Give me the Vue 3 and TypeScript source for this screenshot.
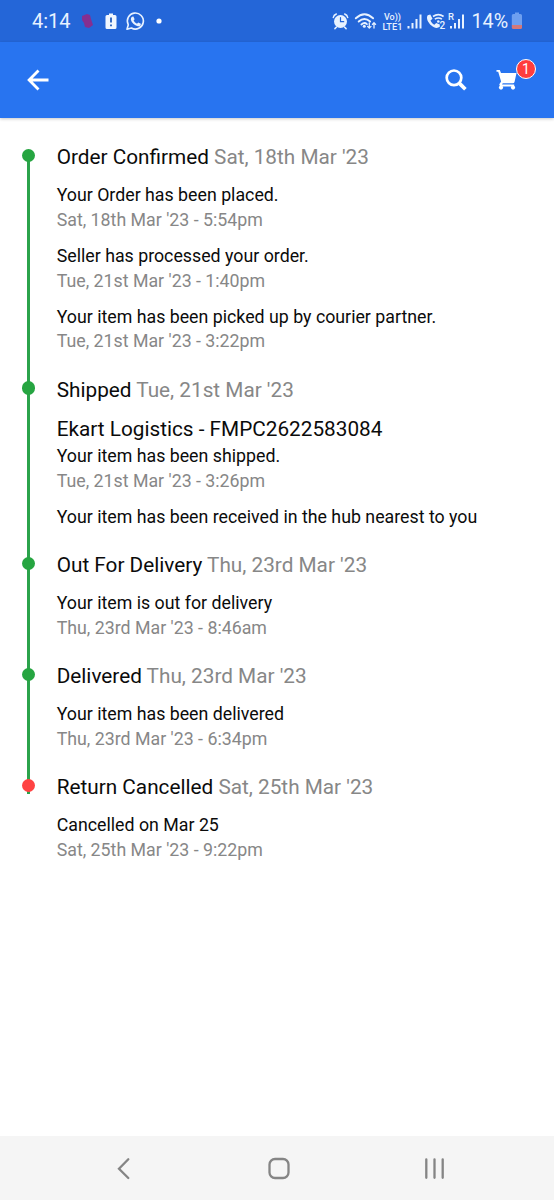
<script setup lang="ts">
interface TrackingEvent {
  text: string
  time?: string
}
interface Step {
  title: string
  date: string
  courier?: string
  cancelled?: boolean
  events: TrackingEvent[]
}

const steps: Step[] = [
  {
    title: 'Order Confirmed',
    date: "Sat, 18th Mar '23",
    events: [
      { text: 'Your Order has been placed.', time: "Sat, 18th Mar '23 - 5:54pm" },
      { text: 'Seller has processed your order.', time: "Tue, 21st Mar '23 - 1:40pm" },
      { text: 'Your item has been picked up by courier partner.', time: "Tue, 21st Mar '23 - 3:22pm" },
    ],
  },
  {
    title: 'Shipped',
    date: "Tue, 21st Mar '23",
    courier: 'Ekart Logistics - FMPC2622583084',
    events: [
      { text: 'Your item has been shipped.', time: "Tue, 21st Mar '23 - 3:26pm" },
      { text: 'Your item has been received in the hub nearest to you' },
    ],
  },
  {
    title: 'Out For Delivery',
    date: "Thu, 23rd Mar '23",
    events: [{ text: 'Your item is out for delivery', time: "Thu, 23rd Mar '23 - 8:46am" }],
  },
  {
    title: 'Delivered',
    date: "Thu, 23rd Mar '23",
    events: [{ text: 'Your item has been delivered', time: "Thu, 23rd Mar '23 - 6:34pm" }],
  },
  {
    title: 'Return Cancelled',
    date: "Sat, 25th Mar '23",
    cancelled: true,
    events: [{ text: 'Cancelled on Mar 25', time: "Sat, 25th Mar '23 - 9:22pm" }],
  },
]
</script>

<template>
  <div class="screen">
    <div class="status">
      <span class="clock">4:14</span>
      <svg class="notices" width="90" height="42" viewBox="76 0 90 42">
        <path d="M82 16l5-2 3 1 1 4 2 6-4 3-4-1-1-4-2-3z" fill="#852f91" />
        <path d="M109 13.500h4v1.500h2q1.500 0 1.500 1.500v11q0 1.500-1.500 1.500h-8q-1.500 0-1.500-1.500v-11q0-1.500 1.500-1.500h2z" fill="#f1f7ff" />
        <path d="M111 17.500v5M111 24.500v1.800" stroke="#245dbc" stroke-width="1.800" />
        <path d="M127 29.300l1.300-4.500a8 8 0 1 1 3.100 3.200z" fill="none" stroke="#e8f2ff" stroke-width="1.600" stroke-linejoin="round" />
        <path d="M132.100 16.700l1.300-.2 1.200 2.800-1 1.300c.8 1.500 1.900 2.500 3.400 3.200l1.200-1.300 2.700 1.300c-.1 2-1.600 2.800-3.100 2.500-3.300-.8-6.200-3.600-6.900-6.500-.2-1.300.3-2.500 1.200-3.100z" fill="#e8f2ff" />
        <circle cx="159" cy="21" r="2.600" fill="#fff" />
      </svg>
      <svg class="signals" width="138" height="42" viewBox="330 0 138 42">
        <g fill="none" stroke="#e8f2ff" stroke-linecap="round">
          <circle cx="339.500" cy="21.500" r="6.500" fill="#e8f2ff" stroke="none" />
          <path d="M332.300 17.500q.4-2.500 3-3.500M343.700 14q2.600 1 3 3.500M335.500 27l-1.600 1.600M343.500 27l1.600 1.600" stroke-width="1.500" />
          <path d="M339.500 17.500v4.200h3.200" stroke="#2466d8" stroke-width="1.200" />
          <path d="M354.800 18.300q8.700-8 17.300 0M357.700 21.500q5.700-5.200 11.400 0M360.400 24.500q3-2.600 5.500-.4" stroke-width="1.900" />
          <path d="M368.300 22.800v5.300m-1.700-1.700l1.700 1.700 1.700-1.700M373 28v-5.300m-1.600 1.700l1.600-1.700 1.600 1.700" stroke-width="1.300" />
        </g>
        <circle cx="363.300" cy="26.300" r="1.500" fill="#e8f2ff" />
        <g fill="#e8f2ff" font-family="Roboto, sans-serif" font-weight="500">
          <text x="383" y="20" font-size="8.500" textLength="17" lengthAdjust="spacingAndGlyphs">Vo))</text>
          <text x="381.500" y="29.500" font-size="9" textLength="20" lengthAdjust="spacingAndGlyphs">LTE1</text>
          <text x="438.500" y="28.500" font-size="10">2</text>
          <text x="447" y="20" font-size="9.500">R</text>
        </g>
        <g fill="none" stroke="#e8f2ff" stroke-width="2">
          <path d="M407.500 28.500v-2.500M411.500 28.500v-5.500M415.500 28.500v-9.500M419.500 28.500v-14" />
          <path d="M450 28.500v-2.500M454 28.500v-5.500M458 28.500v-9.500M462 28.500v-14" />
        </g>
        <path d="M426.600 15.300l2.700-.8 2.200 4.300-2 1.800c.8 2 2 3.300 3.900 4.200l1.800-1.800 3.600 1.600v2.200c-2.200 1.800-5.500 1.500-8.400-1.200-3.500-3.100-5.500-7.400-3.800-10.100z" fill="#e8f2ff" />
        <path d="M432 16.500q5.300-3.700 10.600 0M433.800 19.200q3.600-2.500 7.100 0" fill="none" stroke="#e8f2ff" stroke-width="1.600" />
        <circle cx="437.300" cy="21.500" r="1.300" fill="#e8f2ff" />
      </svg>
      <span class="percent">14%</span>
      <svg class="battery" width="12" height="18" viewBox="0 0 12 18">
        <path d="M4 .5h4v1.500h1.500q1.500 0 1.500 1.500v9.500H.8V3.500Q.8 2 2.300 2H4z" fill="#6e9ff0" />
        <path d="M.8 13H11v2.500q0 1.500-1.500 1.500h-7q-1.700 0-1.700-1.500z" fill="#d47878" />
      </svg>
    </div>

    <header class="toolbar">
      <svg class="back" width="24" height="24" viewBox="0 0 24 24" fill="none" stroke="#fff" stroke-width="2.800">
        <path d="M13.500 2.400L4.100 12l9.400 9.600M4.100 12H23.500" />
      </svg>
      <svg class="search" width="24" height="24" viewBox="0 0 24 24" fill="none" stroke="#fff">
        <circle cx="10" cy="9.800" r="7.300" stroke-width="2.700" />
        <path d="M15.200 15.100l6.200 6.200" stroke-width="3.700" />
      </svg>
      <div class="cart">
        <svg width="24" height="24" viewBox="0 0 24 24">
          <path d="M1.500 2h3.300l1.200 3H21.500l-1.900 8.700q-.3 1.500-1.900 1.500H7.800l-.8 1.400h12.200v1.900H6.200q-2.500-.4-1.700-2.600l1.600-2.400L3.200 3.800H1.500z" fill="#fff" />
          <circle cx="6" cy="19.600" r="2.100" fill="#fff" />
          <circle cx="18" cy="19.600" r="2.100" fill="#fff" />
        </svg>
        <span class="badge">1</span>
      </div>
    </header>

    <main class="timeline">
      <section v-for="step in steps" :key="step.title" class="step" :class="{ cancelled: step.cancelled }">
        <span class="dot"></span>
        <h2>{{ step.title }} <span class="date">{{ step.date }}</span></h2>
        <h3 v-if="step.courier">{{ step.courier }}</h3>
        <div class="events">
          <div v-for="event in step.events" :key="event.text">
            <p>{{ event.text }}</p>
            <p v-if="event.time" class="time">{{ event.time }}</p>
          </div>
        </div>
      </section>
    </main>

    <nav class="system-nav">
      <svg width="24" height="24" viewBox="0 0 24 24"><path d="M16.300 3.200L7 12.700l9.300 9.300" /></svg>
      <svg width="24" height="24" viewBox="0 0 24 24"><rect x="2.500" y="3" width="19" height="19" rx="5.500" /></svg>
      <svg width="24" height="24" viewBox="0 0 24 24"><path d="M4.300 3.300v18.500M12.500 3.300v18.500M20.700 3.300v18.500" /></svg>
    </nav>
  </div>
</template>

<style>
body {
  margin: 0;
}
</style>

<style scoped>
.screen {
  width: 554px;
  height: 1200px;
  display: flex;
  flex-direction: column;
  background: #fff;
  font-family: Roboto, sans-serif;
  color: #0b0b0b;
  overflow: hidden;
}
.status {
  height: 42px;
  flex: none;
  display: flex;
  align-items: center;
  background: #2466d8;
  color: #e8f2ff;
  box-sizing: border-box;
  padding: 0 31.500px 0 32px;
}
.clock {
  width: 44px;
  font-size: 20px;
  white-space: nowrap;
}
.signals {
  margin-left: auto;
}
.percent {
  width: 38px;
  margin-left: 2.500px;
  font-size: 19.700px;
}
.battery {
  margin-left: 1px;
}
.status svg {
  flex: none;
}
.toolbar {
  height: 76px;
  flex: none;
  display: flex;
  align-items: center;
  box-sizing: border-box;
  padding: 0 35px 0 25px;
  background: #2874f0;
  box-shadow: 0 1px 3px rgba(0, 0, 0, 0.22);
}
.search {
  margin-left: auto;
  margin-right: 27px;
}
.cart {
  position: relative;
  width: 24px;
  height: 24px;
}
.cart svg {
  display: block;
}
.badge {
  position: absolute;
  left: 21px;
  top: -9px;
  width: 18px;
  height: 18px;
  border: 1.500px solid #fff;
  border-radius: 50%;
  background: #ff3d3d;
  color: #fff;
  font-size: 14px;
  line-height: 18px;
  text-align: center;
}
.timeline {
  flex: 1;
  padding: 27.400px 20px 0 56.700px;
}
.step {
  position: relative;
  padding-bottom: 23.500px;
}
.step::before {
  content: '';
  position: absolute;
  left: -29.700px;
  top: 12px;
  bottom: -12px;
  width: 3px;
  background: #2ba34b;
}
.step.cancelled::before {
  bottom: auto;
  height: 7px;
}
.dot {
  position: absolute;
  z-index: 1;
  left: -35.200px;
  top: 3.600px;
  width: 13.500px;
  height: 13.500px;
  border-radius: 50%;
  background: #26a541;
}
.cancelled .dot {
  background: #ff4343;
}
h2,
h3 {
  margin: 0;
  font-size: 20.750px;
  font-weight: 400;
  line-height: 25px;
  white-space: nowrap;
}
h3 {
  margin-top: 14.300px;
}
.date,
.time {
  color: #878787;
}
.events {
  display: flex;
  flex-direction: column;
  gap: 11.100px;
  margin-top: 12.800px;
}
h3 + .events {
  margin-top: 2.300px;
}
p {
  margin: 0;
  font-size: 17.780px;
  line-height: 24.800px;
  white-space: nowrap;
}
.system-nav {
  height: 64px;
  flex: none;
  display: flex;
  justify-content: space-between;
  align-items: center;
  box-sizing: border-box;
  padding: 0 108px 0 112px;
  background: #f5f5f5;
}
.system-nav svg {
  fill: none;
  stroke: #858585;
  stroke-width: 2.300;
  stroke-linecap: round;
}
</style>
